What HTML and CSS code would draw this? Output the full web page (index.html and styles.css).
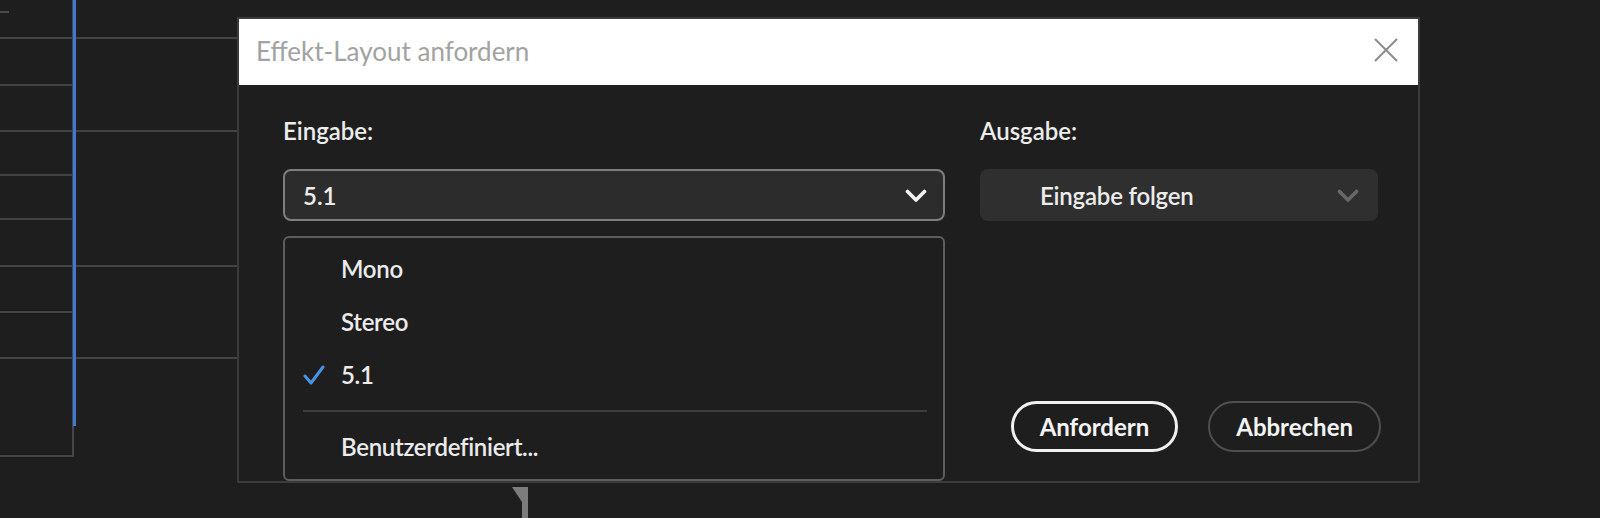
FILE: index.html
```html
<!DOCTYPE html>
<html lang="de">
<head>
  <meta charset="UTF-8">
  <meta name="viewport" content="width=device-width, initial-scale=1.0">
  <title>Effekt-Layout anfordern</title>
  <link rel="stylesheet" href="styles.css">
</head>
<body>

<!-- track area behind the dialog -->
<div class="timeline">
  <div class="ruler"><div class="head"><span class="tick"></span></div><div class="lane"></div></div>
  <div class="track long h47"><div class="head"></div><div class="lane"></div></div>
  <div class="track h46"><div class="head"></div><div class="lane"></div></div>
  <div class="track long h44"><div class="head"></div><div class="lane"></div></div>
  <div class="track h44"><div class="head"></div><div class="lane"></div></div>
  <div class="track h47"><div class="head"></div><div class="lane"></div></div>
  <div class="track long h46"><div class="head"></div><div class="lane"></div></div>
  <div class="track h46"><div class="head"></div><div class="lane"></div></div>
  <div class="track long last"><div class="head"></div><div class="lane"></div></div>
  <div class="playhead"></div>
</div>

<svg class="marker" width="18" height="31" viewBox="0 0 18 31">
  <path d="M0 0 H16 V31 H10 V15 Z" fill="#7c7c7c"/>
</svg>

<div class="dialog">
  <div class="dialog-title">
    <span class="title-text">Effekt-Layout anfordern</span>
    <button class="close">
      <svg width="24" height="24" viewBox="0 0 24 24">
        <path d="M1 1 L23 23 M23 1 L1 23" stroke="#8c8c8c" stroke-width="2" fill="none"/>
      </svg>
    </button>
  </div>

  <div class="dialog-body">
    <div class="col col-in">
      <div class="field-label">Eingabe:</div>
      <div class="select">
        <span>5.1</span>
        <svg class="chevron" width="22" height="14" viewBox="0 0 22 14">
          <path d="M2.5 2.5 L11 11 L19.5 2.5" stroke="#f2f2f2" stroke-width="3.6" fill="none" stroke-linecap="round" stroke-linejoin="round"/>
        </svg>
      </div>
      <ul class="menu">
        <li class="item"><span class="mark"></span>Mono</li>
        <li class="item"><span class="mark"></span>Stereo</li>
        <li class="item">
          <span class="mark">
            <svg width="22" height="20" viewBox="0 0 22 20">
              <path d="M2 11 L8 18 L20 2" stroke="#4a92e6" stroke-width="3" fill="none" stroke-linecap="round" stroke-linejoin="round"/>
            </svg>
          </span>5.1
        </li>
        <li class="sep"></li>
        <li class="item"><span class="mark"></span>Benutzerdefiniert...</li>
      </ul>
    </div>

    <div class="col col-out">
      <div class="field-label">Ausgabe:</div>
      <div class="select flat">
        <span>Eingabe folgen</span>
        <svg class="chevron" width="22" height="14" viewBox="0 0 22 14">
          <path d="M2.5 2.5 L11 11 L19.5 2.5" stroke="#686868" stroke-width="3.6" fill="none" stroke-linecap="round" stroke-linejoin="round"/>
        </svg>
      </div>
      <div class="actions">
        <button class="btn primary">Anfordern</button>
        <button class="btn">Abbrechen</button>
      </div>
    </div>
  </div>
</div>

</body>
</html>
```

FILE: styles.css
```css
* {
  box-sizing: border-box;
}

body {
  margin: 0;
  background: #1e1e1e;
  font-family: Lato, "Noto Sans", sans-serif;
  color: #ececec;
  overflow: hidden;
}

/* timeline behind the dialog */
.timeline {
  position: relative;
  width: 720px;
}

.ruler,
.track {
  display: flex;
}

.ruler {
  height: 37px;
}

.head {
  width: 74px;
  border-right: 2px solid #474747;
}

.lane {
  flex: 1;
}

.tick {
  display: block;
  width: 9px;
  height: 2px;
  margin-top: 11px;
  background: #4a4a4a;
}

.track .head {
  border-top: 2px solid #434343;
}

.track.long .lane {
  border-top: 2px solid #434343;
}

.h44 { height: 44px; }
.h46 { height: 46px; }
.h47 { height: 47px; }

.track.last {
  height: 100px;
}

.track.last .head {
  border-bottom: 2px solid #434343;
}

.playhead {
  position: absolute;
  left: 73px;
  top: 0;
  width: 3px;
  height: 426px;
  background: #3b7bd6;
}

.marker {
  position: absolute;
  left: 512px;
  top: 487px;
}

/* dialog */
.dialog {
  position: absolute;
  left: 237px;
  top: 17px;
  width: 1183px;
  height: 466px;
  display: flex;
  flex-direction: column;
  background: #1e1e1e;
  border: 2px solid #3b3b3b;
}

.dialog-title {
  height: 66px;
  flex-shrink: 0;
  display: flex;
  align-items: center;
  justify-content: space-between;
  padding: 0 20px 0 17px;
  background: #ffffff;
}

.title-text {
  font-size: 26px;
  color: #a2a2a2;
  padding-bottom: 2px;
}

.close {
  display: flex;
  padding: 0;
  margin-bottom: 5px;
  border: none;
  background: none;
  cursor: pointer;
}

.dialog-body {
  flex: 1;
  display: flex;
  gap: 35px;
  padding: 32px 37px 0 44px;
}

.col {
  display: flex;
  flex-direction: column;
}

.col-in {
  width: 662px;
}

.col-out {
  flex: 1;
}

.field-label {
  height: 28px;
  line-height: 28px;
  font-size: 24px;
  font-weight: 600;
  margin-bottom: 24px;
}

.select {
  height: 52px;
  display: flex;
  align-items: center;
  justify-content: space-between;
  padding: 0 16px 0 18px;
  font-size: 24px;
  font-weight: 600;
  background: #2c2c2c;
  border: 2px solid #7e7e7e;
  border-radius: 8px;
}

.select.flat {
  margin-right: 3px;
  padding: 0 19px 0 60px;
  background: #2f2f2f;
  border: none;
  letter-spacing: -0.2px;
}

.chevron {
  margin-top: 1px;
}

.menu {
  list-style: none;
  margin: 15px 0 0;
  padding: 4px 0 6px;
  border: 2px solid #5d5d5d;
  border-radius: 6px;
}

.menu .item {
  height: 53px;
  display: flex;
  align-items: center;
  padding-left: 18px;
  font-size: 24px;
  font-weight: 600;
  letter-spacing: -0.3px;
  color: #ebebeb;
}

.mark {
  width: 38px;
  display: flex;
  align-items: center;
}

.menu .sep {
  height: 2px;
  margin: 9px 16px 8px 18px;
  background: #3c3c3c;
}

.actions {
  margin-top: auto;
  padding-bottom: 29px;
  display: flex;
  justify-content: flex-end;
  gap: 30px;
}

.btn {
  height: 51px;
  padding: 0 26px;
  border: 2px solid #4f4f4f;
  border-radius: 26px;
  background: transparent;
  font-family: inherit;
  font-size: 24px;
  font-weight: 700;
  color: #f4f4f4;
  cursor: pointer;
}

.btn.primary {
  border: 3px solid #f0f0f0;
}
```
